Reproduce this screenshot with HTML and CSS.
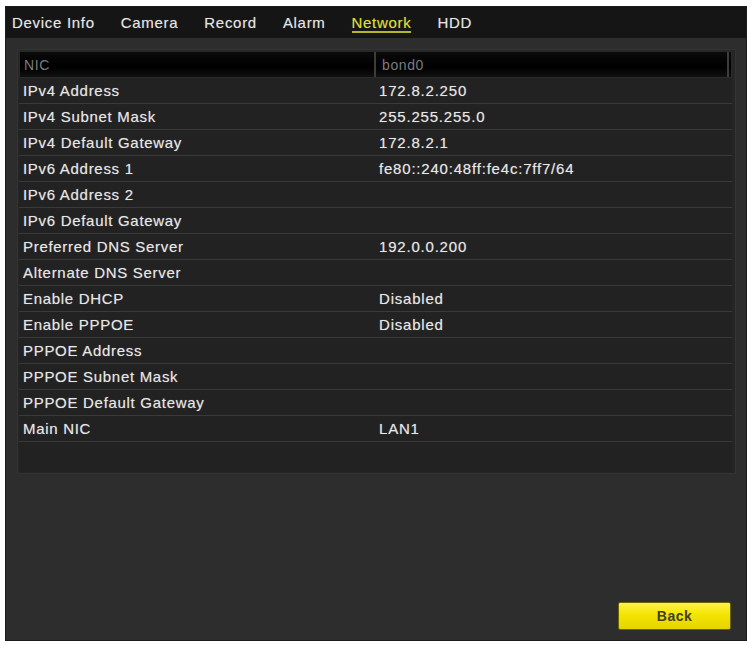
FILE: index.html
```html
<!DOCTYPE html>
<html>
<head>
<meta charset="utf-8">
<link rel="stylesheet" href="styles.css">
</head>
<body>
<div class="window">
  <div class="tabs">
    <span class="tab">Device Info</span>
    <span class="tab">Camera</span>
    <span class="tab">Record</span>
    <span class="tab">Alarm</span>
    <span class="tab active">Network</span>
    <span class="tab">HDD</span>
  </div>
  <div class="content">
    <div class="table">
      <div class="head">
        <div class="hcell first">NIC</div>
        <div class="hcell second">bond0</div>
      </div>
      <div class="row"><div class="label">IPv4 Address</div><div class="value">172.8.2.250</div></div>
      <div class="row"><div class="label">IPv4 Subnet Mask</div><div class="value">255.255.255.0</div></div>
      <div class="row"><div class="label">IPv4 Default Gateway</div><div class="value">172.8.2.1</div></div>
      <div class="row"><div class="label">IPv6 Address 1</div><div class="value">fe80::240:48ff:fe4c:7ff7/64</div></div>
      <div class="row"><div class="label">IPv6 Address 2</div><div class="value"></div></div>
      <div class="row"><div class="label">IPv6 Default Gateway</div><div class="value"></div></div>
      <div class="row"><div class="label">Preferred DNS Server</div><div class="value">192.0.0.200</div></div>
      <div class="row"><div class="label">Alternate DNS Server</div><div class="value"></div></div>
      <div class="row"><div class="label">Enable DHCP</div><div class="value">Disabled</div></div>
      <div class="row"><div class="label">Enable PPPOE</div><div class="value">Disabled</div></div>
      <div class="row"><div class="label">PPPOE Address</div><div class="value"></div></div>
      <div class="row"><div class="label">PPPOE Subnet Mask</div><div class="value"></div></div>
      <div class="row"><div class="label">PPPOE Default Gateway</div><div class="value"></div></div>
      <div class="row"><div class="label">Main NIC</div><div class="value">LAN1</div></div>
      <div class="row empty"></div>
    </div>
    <div class="actions">
      <button class="back">Back</button>
    </div>
  </div>
</div>
</body>
</html>
```

FILE: styles.css
```css
html, body {
  margin: 0;
  padding: 0;
  background: #ffffff;
}

body {
  font-family: "Liberation Sans", Arial, sans-serif;
}

.window {
  margin: 6px 0 0 5px;
  width: 740px;
  height: 633px;
  background: #2d2d2d;
  border: 1px solid #1b1b1b;
  display: flex;
  flex-direction: column;
}

.tabs {
  height: 31px;
  background: #151515;
  display: flex;
  align-items: center;
  gap: 26px;
  padding-left: 6px;
  flex: none;
}

.tab {
  color: #e4e4e4;
  font-size: 15px;
  letter-spacing: 0.7px;
  text-shadow: 0 0 1px rgba(255, 255, 255, 0.35);
}

.tab.active {
  color: #dede2a;
  border-bottom: 2px solid #b5b52a;
  padding-top: 2px;
}

.content {
  flex: 1;
  display: flex;
  flex-direction: column;
  padding: 11px 10px 10px 11px;
}

.table {
  background: #262626;
  border: 1px solid #333333;
  padding: 1px 3px 1px 1px;
}

.head {
  display: flex;
  height: 25px;
  background: linear-gradient(#0a0a0a, #000000 60%, #111111);
  border: 1px solid #2a2a2a;
  align-items: center;
}

.hcell {
  color: #7c7c7c;
  font-size: 14px;
  letter-spacing: 0.6px;
  height: 100%;
  display: flex;
  align-items: center;
}

.hcell.first {
  width: 350px;
  padding-left: 4px;
  border-right: 2px solid #3c3c3c;
}

.hcell.second {
  flex: 1;
  padding-left: 6px;
  border-right: 2px solid #3c3c3c;
  margin-right: 2px;
}

.row {
  display: flex;
  height: 25px;
  align-items: center;
  background: #222222;
  border-bottom: 1px solid #3a3a3a;
}

.row.empty {
  height: 30px;
  border-bottom: none;
}

.label {
  width: 356px;
  padding-left: 4px;
  color: #e6e6e6;
  font-size: 15px;
  letter-spacing: 0.7px;
  text-shadow: 0 0 1px rgba(255, 255, 255, 0.4);
}

.value {
  flex: 1;
  color: #e6e6e6;
  font-size: 15px;
  letter-spacing: 0.8px;
  text-shadow: 0 0 1px rgba(255, 255, 255, 0.4);
}

.actions {
  margin-top: auto;
  display: flex;
  justify-content: flex-end;
  padding-right: 5px;
}

.back {
  width: 113px;
  height: 28px;
  background: linear-gradient(#fff24a, #f3e400 45%, #e6d400);
  border: 1px solid #6b6400;
  border-radius: 2px;
  font-family: "Liberation Sans", Arial, sans-serif;
  font-weight: bold;
  font-size: 14px;
  color: #3f3f2a;
  letter-spacing: 0.5px;
  padding: 0;
}
```
